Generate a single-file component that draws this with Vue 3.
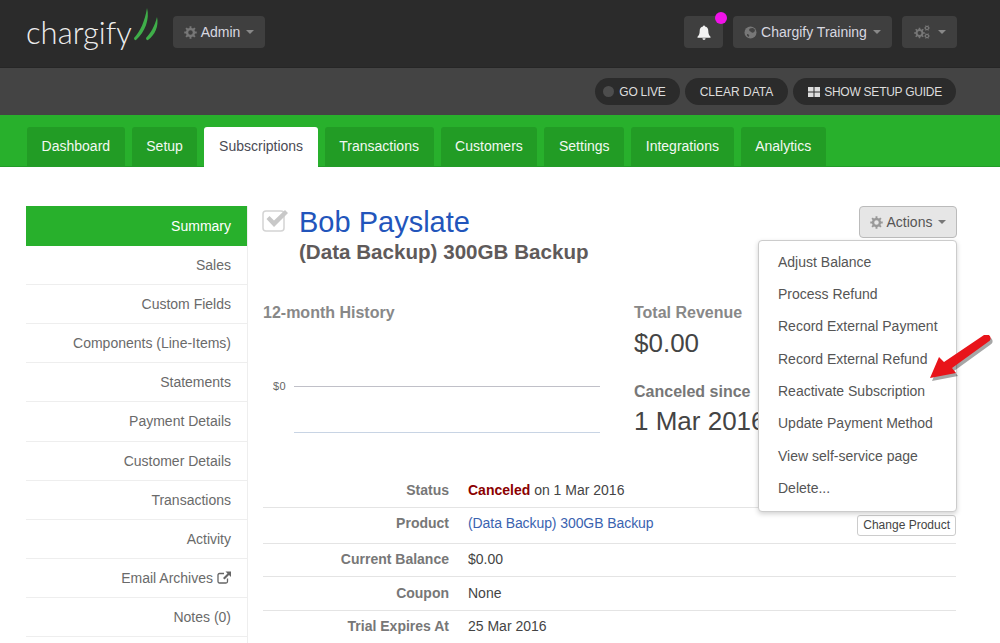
<script setup>
const tabs = ["Dashboard", "Setup", "Subscriptions", "Transactions", "Customers", "Settings", "Integrations", "Analytics"];
const sideLinks = ["Summary", "Sales", "Custom Fields", "Components (Line-Items)", "Statements", "Payment Details", "Customer Details", "Transactions", "Activity", "Email Archives", "Notes (0)"];
const actions = ["Adjust Balance", "Process Refund", "Record External Payment", "Record External Refund", "Reactivate Subscription", "Update Payment Method", "View self-service page", "Delete..."];

// 8-tooth gear outline with a round hole, used by all the cog icons
function gear(cx, cy, outer, teeth = 8) {
  const inner = outer * 0.74;
  const hole = outer * 0.36;
  const step = (Math.PI * 2) / teeth;
  const pts = [];
  for (let i = 0; i < teeth; i++) {
    const a = i * step;
    const w = step * 0.2;
    [[a - w * 1.3, inner], [a - w, outer], [a + w, outer], [a + w * 1.3, inner]].forEach(([t, r]) => {
      pts.push((cx + r * Math.cos(t)).toFixed(2) + " " + (cy + r * Math.sin(t)).toFixed(2));
    });
  }
  return "M" + pts.join("L") + "Z" +
    `M${cx + hole} ${cy}a${hole} ${hole} 0 1 0 ${-hole * 2} 0a${hole} ${hole} 0 1 0 ${hole * 2} 0Z`;
}
const cog = gear(7, 7, 6.8);
const cogs = gear(5.5, 8, 5.4) + gear(13, 3, 2.9, 6) + gear(13, 11, 2.9, 6);
</script>

<template>
  <div class="page">
    <header class="topbar">
      <div class="logo">
        <span>chargify</span>
        <svg class="leaves" width="26" height="34" viewBox="0 0 26 34">
          <path d="M1 31C7 25 12 14 14 1C17 12 12 25 3 33C2 33.500 1 32.500 1 31Z" fill="#3fae49" />
          <path d="M13 31C17 27 22 19 24 10C26 19 22 28 15 33C14 33.500 13 32.500 13 31Z" fill="#3fae49" />
        </svg>
      </div>
      <button class="top-btn admin">
        <svg width="13" height="13" viewBox="0 0 14 14"><path :d="cog" fill="#777" fill-rule="evenodd" /></svg>
        Admin <i class="caret"></i>
      </button>
      <div class="top-right">
        <button class="top-btn bell">
          <svg width="14" height="15" viewBox="0 0 14 15">
            <path d="M7 0.500a1 1 0 0 1 1 1.100C10.300 2 11.300 3.800 11.300 6c0 3 .9 4.600 2.200 5.800v.9H.5v-.9C1.800 10.600 2.700 9 2.700 6c0-2.200 1-4 3.300-4.400A1 1 0 0 1 7 .5ZM5.400 13.300h3.200a1.600 1.600 0 0 1-3.200 0Z" fill="#f2f2f2" />
          </svg>
          <span class="dot"></span>
        </button>
        <button class="top-btn training">
          <svg width="13" height="13" viewBox="0 0 13 13">
            <circle cx="6.500" cy="6.500" r="6" fill="#777" />
            <path d="M6 2.500c2-1 4-.5 4.800 1 .5 1.500-.5 3-2 3.300C7.500 7 7 5.500 5.500 5 5 4 5 3 6 2.500ZM3 8c1 0 2 .5 2.300 1.500L4.500 11 3 9.500Z" fill="#444" />
          </svg>
          Chargify Training <i class="caret"></i>
        </button>
        <button class="top-btn cogs">
          <svg width="16" height="14" viewBox="0 0 16 14"><path :d="cogs" fill="#777" fill-rule="evenodd" /></svg>
          <i class="caret"></i>
        </button>
      </div>
    </header>

    <div class="subbar">
      <button class="pill golive"><span class="live-dot"></span>GO LIVE</button>
      <button class="pill clear">CLEAR DATA</button>
      <button class="pill guide">
        <svg width="12" height="10" viewBox="0 0 12 10">
          <path d="M0 0h5.500v4.500H0ZM6.500 0H12v4.500H6.500ZM0 5.500h5.500V10H0ZM6.500 5.500H12V10H6.500Z" fill="#ddd" />
        </svg>
        SHOW SETUP GUIDE
      </button>
    </div>

    <nav class="tabs">
      <a v-for="t in tabs" :key="t" class="tab" :class="{ active: t === 'Subscriptions' }">{{ t }}</a>
    </nav>

    <div class="content">
      <aside class="side">
        <a v-for="s in sideLinks" :key="s" class="side-link" :class="{ active: s === 'Summary' }">
          {{ s }}
          <svg v-if="s === 'Email Archives'" width="14" height="13" viewBox="0 0 14 13">
            <path d="M10.500 7.500v3a1.500 1.500 0 0 1-1.500 1.500H2.500A1.500 1.500 0 0 1 1 10.500V4a1.500 1.500 0 0 1 1.500-1.500H7" fill="none" stroke="#666" stroke-width="1.300" />
            <path d="M8.500 0.500H14V6l-2-2-4.500 4.500-1.500-1.500L10.500 2.500Z" fill="#666" />
          </svg>
        </a>
      </aside>

      <main class="main">
        <div class="title-row">
          <svg class="check" width="27" height="24" viewBox="0 0 27 24">
            <rect x="1" y="3" width="21" height="20" rx="3" fill="none" stroke="#d4d4d4" stroke-width="1.500" />
            <path d="M4.500 11l3-3 4.500 4.500L23 2l3 3-14 14Z" fill="#c8c8c8" />
          </svg>
          <div class="title-text">
            <h1>Bob Payslate</h1>
            <h2>(Data Backup) 300GB Backup</h2>
          </div>
          <button class="actions-btn">
            <svg width="13" height="13" viewBox="0 0 14 14"><path :d="cog" fill="#999" fill-rule="evenodd" /></svg>
            Actions <i class="caret dark"></i>
          </button>
        </div>

        <ul class="menu">
          <li v-for="a in actions" :key="a">{{ a }}</li>
        </ul>

        <div class="stats">
          <section class="history">
            <h3>12-month History</h3>
            <div class="chart">
              <div class="chart-row"><span>$0</span><i></i></div>
              <div class="chart-row low"><span></span><i></i></div>
            </div>
          </section>
          <section class="totals">
            <h3>Total Revenue</h3>
            <p class="big">$0.00</p>
            <h3 class="since">Canceled since</h3>
            <p class="big date">1 Mar 2016</p>
          </section>
        </div>

        <div class="details">
          <div class="row">
            <label>Status</label>
            <div><b class="canceled">Canceled</b> on 1 Mar 2016</div>
          </div>
          <div class="row product">
            <label>Product</label>
            <a class="link">(Data Backup) 300GB Backup</a>
            <button class="change">Change Product</button>
          </div>
          <div class="row">
            <label>Current Balance</label>
            <div>$0.00</div>
          </div>
          <div class="row">
            <label>Coupon</label>
            <div>None</div>
          </div>
          <div class="row">
            <label>Trial Expires At</label>
            <div>25 Mar 2016</div>
          </div>
        </div>

        <svg class="arrow" width="70" height="52" viewBox="0 0 70 52">
          <path d="M57 0c2-1.500 6-.5 6.500 2.500.3 1.500-.2 3-1.500 3.800L25 33l4 5L3 43l9-21 5 5Z" fill="#000" opacity=".35" transform="translate(2 3)" />
          <path d="M57 0c2-1.500 6-.5 6.500 2.500.3 1.500-.2 3-1.500 3.800L25 33l4 5L3 43l9-21 5 5Z" fill="#e8141a" />
        </svg>
      </main>
    </div>
  </div>
</template>

<style>
body {
  background: #fff;
  overflow: hidden;
}
</style>

<style scoped>
.page,
.page * {
  box-sizing: border-box;
}
.page {
  width: 1000px;
  height: 643px;
  overflow: hidden;
  font-family: "Liberation Sans", Arial, sans-serif;
  font-size: 14px;
  color: #555;
}
button {
  font-family: inherit;
  cursor: pointer;
  white-space: nowrap;
}
.topbar {
  height: 68px;
  background: #2b2b2b;
  border-bottom: 1px solid #262626;
  display: flex;
  align-items: flex-start;
  padding: 16px 43px 0 26px;
}
.logo {
  display: flex;
  align-items: flex-end;
  height: 32px;
  color: #eee;
  font-family: Lato, sans-serif;
  font-weight: 300;
  font-size: 31px;
  line-height: 32px;
  width: 147px;
  flex: none;
}
.leaves {
  flex: none;
  position: relative;
  top: -8px;
  margin: -8px 0 -1px 1px;
}
.top-btn {
  height: 32px;
  background: #3f3f3f;
  border: 0;
  border-radius: 4px;
  color: #d8d8e0;
  font-size: 14px;
  padding: 0;
  display: flex;
  align-items: center;
  justify-content: center;
  gap: 4px;
  position: relative;
}
.admin {
  width: 92px;
}
.training {
  width: 159px;
}
.caret {
  display: inline-block;
  width: 0;
  height: 0;
  border: 4px solid transparent;
  border-top-color: #888;
  border-bottom: 0;
  margin-left: 2px;
}
.caret.dark {
  border-top-color: #777;
}
.top-right {
  margin-left: auto;
  display: flex;
  gap: 10px;
}
.bell {
  width: 39px;
}
.dot {
  position: absolute;
  right: -4px;
  top: -4px;
  width: 12px;
  height: 12px;
  border-radius: 50%;
  background: #f012e8;
}
.cogs {
  width: 55px;
  gap: 6px;
}
.subbar {
  height: 47px;
  background: #444;
  display: flex;
  align-items: flex-start;
  justify-content: flex-end;
  gap: 5px;
  padding: 10px 44px 0 0;
}
.pill {
  height: 27px;
  border: 0;
  border-radius: 14px;
  background: #2b2b2b;
  color: #ddd;
  font-size: 12px;
  padding: 0 14px;
  display: flex;
  align-items: center;
  gap: 4px;
}
.golive,
.guide {
  letter-spacing: -0.25px;
}
.golive {
  padding: 0 14px 0 8px;
}
.clear {
  padding: 0 15px;
}
.guide {
  padding: 0 14px 0 15px;
}
.live-dot {
  width: 11px;
  height: 11px;
  border-radius: 50%;
  background: #4d4d4d;
  margin-right: 1px;
}
.tabs {
  height: 52px;
  background: #28b02c;
  display: flex;
  gap: 7px;
  padding: 12px 0 0 27px;
  border-bottom: 1px solid #229c28;
}
.tab {
  background: #229c25;
  color: #f2f8f2;
  padding: 0 14.6px;
  line-height: 38px;
  height: 39px;
  border-radius: 3px 3px 0 0;
}
.tab.active {
  background: #fff;
  color: #4b4b55;
  height: 40px;
}
.content {
  display: flex;
  padding: 39px 43px 0 26px;
}
.side {
  width: 222px;
  flex: none;
  border-right: 1px solid #eee;
  margin-right: 15px;
}
.side-link {
  display: flex;
  align-items: center;
  justify-content: flex-end;
  gap: 4px;
  height: 39.15px;
  padding-right: 16px;
  border-bottom: 1px solid #eee;
  color: #6a6a6a;
}
.side-link.active {
  height: 39.8px;
  background: #28b02c;
  color: #fff;
  border-bottom: 0;
}
.main {
  flex: 1;
  position: relative;
}
.title-row {
  display: flex;
  height: 70px;
}
.check {
  flex: none;
  margin: 2px 10px 0 -1px;
}
h1 {
  margin: 0;
  color: #2255bb;
  font-size: 29px;
  font-weight: 400;
  line-height: 32px;
}
h2 {
  margin: 0;
  color: #5f5a5a;
  font-size: 20.6px;
  font-weight: 700;
  line-height: 27px;
}
.actions-btn {
  margin-left: auto;
  height: 32px;
  width: 98px;
  background: #e6e6e6;
  border: 1px solid #bbb;
  border-radius: 4px;
  color: #555;
  font-size: 14px;
  display: flex;
  align-items: center;
  justify-content: center;
  gap: 4px;
  padding: 0;
}
.menu {
  position: absolute;
  z-index: 2;
  top: 34px;
  right: 0;
  width: 199px;
  margin: 0;
  padding: 4.5px 0 6px;
  list-style: none;
  background: #fff;
  border: 1px solid #ccc;
  border-radius: 4px;
  box-shadow: 0 2px 5px rgba(0, 0, 0, 0.18);
}
.menu li {
  height: 32.4px;
  line-height: 32.4px;
  padding-left: 19px;
  color: #555;
}
.stats {
  display: flex;
  height: 198px;
}
.history {
  width: 371px;
}
h3 {
  margin: 0;
  color: #888;
  font-size: 16px;
  font-weight: 700;
  line-height: 20px;
  padding-top: 27px;
  height: 47px;
}
.chart {
  margin-top: 62px;
}
.chart-row {
  display: flex;
  align-items: center;
  height: 2px;
}
.chart-row.low {
  margin-top: 44px;
}
.chart-row span {
  width: 31px;
  padding-left: 10px;
  font-size: 11px;
  color: #666;
  letter-spacing: 0.5px;
}
.chart-row i {
  width: 306px;
  height: 1px;
  background: #c0c0c8;
}
.chart-row.low i {
  background: #c8d4e4;
}
.big {
  margin: 5px 0 0;
  font-size: 26px;
  line-height: 30px;
  color: #444;
}
h3.since {
  color: #777;
  padding-top: 24px;
  height: 44px;
}
.date {
  margin-top: 4px;
}
.details {
  padding-right: 1px;
}
.row {
  display: flex;
  align-items: center;
  height: 33.5px;
  border-bottom: 1px solid #e4e4e4;
  color: #444;
  padding-bottom: 1px;
}
.row.product {
  height: 36px;
  padding-bottom: 4px;
}
.row label {
  width: 186px;
  text-align: right;
  margin-right: 19px;
  font-weight: 700;
  color: #777;
}
.canceled {
  color: #8b0000;
}
.link {
  color: #3a63b0;
  letter-spacing: -0.08px;
}
.change {
  margin-left: auto;
  height: 21px;
  background: #fff;
  border: 1px solid #ccc;
  border-radius: 3px;
  font-size: 12px;
  color: #444;
  padding: 0 5px;
  position: relative;
  top: 2px;
}
.arrow {
  position: absolute;
  z-index: 3;
  left: 664px;
  top: 129px;
}
</style>
